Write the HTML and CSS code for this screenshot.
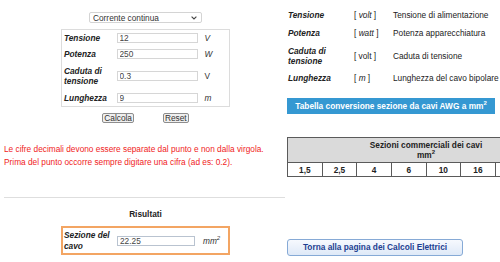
FILE: index.html
```html
<!DOCTYPE html>
<html lang="it">
<head>
  <meta charset="UTF-8">
  <title>Sezione cavi - corrente continua</title>
  <link rel="stylesheet" href="styles.css">
</head>
<body>

  <div class="page">

    <div class="calc">
      <div class="mode">
        <span class="scelta">
          <select>
            <option>Corrente continua</option>
            <option>Corrente alternata</option>
          </select>
          <svg class="freccia" width="6" height="4" viewBox="0 0 6 4"><path d="M0.6 0.6 L3 3 L5.4 0.6" fill="none" stroke="#444" stroke-width="1.1"/></svg>
        </span>
      </div>

      <table class="dati">
        <tr class="r1">
          <th>Tensione</th>
          <td class="campo"><input type="text" value="12"></td>
          <td class="unit"><i>V</i></td>
        </tr>
        <tr class="r1">
          <th>Potenza</th>
          <td class="campo"><input type="text" value="250"></td>
          <td class="unit"><i>W</i></td>
        </tr>
        <tr class="r2">
          <th>Caduta di<br>tensione</th>
          <td class="campo"><input type="text" value="0.3"></td>
          <td class="unit">V</td>
        </tr>
        <tr class="r3">
          <th>Lunghezza</th>
          <td class="campo"><input type="text" value="9"></td>
          <td class="unit"><i>m</i></td>
        </tr>
      </table>

      <div class="azioni">
        <button>Calcola</button>
        <button>Reset</button>
      </div>

      <p class="avviso">
        Le cifre decimali devono essere separate dal punto e non dalla virgola.<br>
        Prima del punto occorre sempre digitare una cifra (ad es: 0.2).
      </p>

      <hr>

      <h2>Risultati</h2>

      <table class="risultato">
        <tr>
          <th>Sezione del<br>cavo</th>
          <td class="campo"><input type="text" value="22.25"></td>
          <td class="unit"><i>mm<sup>2</sup></i></td>
        </tr>
      </table>
    </div>

    <div class="info">
      <table class="legenda">
        <tr class="r1">
          <th>Tensione</th>
          <td class="um">[ <i>volt</i> ]</td>
          <td>Tensione di alimentazione</td>
        </tr>
        <tr class="r1">
          <th>Potenza</th>
          <td class="um">[ <i>watt</i> ]</td>
          <td>Potenza apparecchiatura</td>
        </tr>
        <tr class="r2">
          <th>Caduta di<br>tensione</th>
          <td class="um">[ volt ]</td>
          <td>Caduta di tensione</td>
        </tr>
        <tr class="r1">
          <th>Lunghezza</th>
          <td class="um">[ <i>m</i> ]</td>
          <td>Lunghezza del cavo bipolare</td>
        </tr>
      </table>

      <div class="titolo">Tabella conversione sezione da cavi AWG a mm<sup>2</sup></div>

      <table class="sezioni">
        <tr>
          <th colspan="8">Sezioni commerciali dei cavi<br>mm<sup>2</sup></th>
        </tr>
        <tr>
          <td>1,5</td>
          <td>2,5</td>
          <td>4</td>
          <td>6</td>
          <td>10</td>
          <td>16</td>
          <td></td>
          <td></td>
        </tr>
      </table>

      <a class="torna" href="#">Torna alla pagina dei Calcoli Elettrici</a>
    </div>

  </div>

</body>
</html>
```

FILE: styles.css
```css
* {
  box-sizing: border-box;
}

body {
  margin: 0;
  font-family: "Liberation Sans", Arial, sans-serif;
  font-size: 8.3px;
  color: #222;
  background: #fff;
  overflow: hidden;
}

.page {
  display: flex;
  padding-left: 4px;
}

/* colonna calcolo */

.calc {
  width: 283px;
  flex-shrink: 0;
}

.mode {
  padding-top: 12px;
  text-align: center;
}

.scelta {
  position: relative;
  display: inline-block;
  vertical-align: top;
}

select {
  display: block;
  width: 113px;
  height: 11px;
  font-family: inherit;
  font-size: 8.3px;
  color: #333;
  border: 1px solid #d4d4d4;
  border-radius: 2px;
  padding: 0 3px;
  background: #fff;
  appearance: none;
  -webkit-appearance: none;
}

.freccia {
  position: absolute;
  right: 5px;
  top: 4px;
  pointer-events: none;
}

table {
  border-collapse: collapse;
}

th {
  text-align: left;
  font-weight: bold;
  font-style: italic;
  line-height: 10px;
  padding: 0;
}

td {
  padding: 0;
  line-height: 10px;
}

.dati {
  width: 169px;
  margin: 6px auto 0;
  border: 1px solid #dcdcdc;
}

.dati tr.r1 { height: 16px; }
.dati tr.r2 { height: 28px; }
.dati tr.r3 { height: 17px; }

.dati th {
  width: 55px;
  padding-left: 2px;
}

.campo {
  width: 85px;
  padding-right: 2px;
}

input {
  display: block;
  width: 81px;
  height: 10px;
  font-family: inherit;
  font-size: 8.3px;
  color: #444;
  border: 1px solid #d6d6d6;
  padding: 0 2px;
}

.unit {
  padding-left: 3px;
  color: #333;
}

.azioni {
  display: flex;
  justify-content: center;
  gap: 29px;
  margin-top: 6px;
}

button {
  height: 10px;
  padding: 0 1px;
  font-family: inherit;
  font-size: 8.3px;
  line-height: 8px;
  color: #333;
  background: #efefef;
  border: 1px solid #8d8d8d;
  border-radius: 2px;
}

.avviso {
  margin: 20px 0 0;
  line-height: 13px;
  color: #f01c1c;
}

hr {
  border: 0;
  border-top: 1px solid #dedede;
  margin: 28px 0 0;
  width: 281px;
}

h2 {
  margin: 10px 0 0;
  font-size: 8.3px;
  line-height: 13px;
  text-align: center;
}

.risultato {
  width: 169px;
  height: 29px;
  margin: 5px auto 0;
  border: 2px solid #f3a563;
}

.risultato th {
  width: 55px;
  padding-left: 1px;
  line-height: 11px;
}

.risultato .campo {
  width: 82px;
}

.risultato input {
  width: 78px;
  border-color: #b9c3d0;
}

.risultato .unit {
  padding-left: 4px;
}

sup {
  font-size: 6px;
  line-height: 0;
}

/* colonna informazioni */

.info {
  flex: 1;
  min-width: 0;
}

.legenda {
  margin-top: 6px;
}

.legenda tr.r1 { height: 18px; }
.legenda tr.r2 { height: 27px; }

.legenda th {
  width: 67px;
  padding-left: 1px;
}

.legenda .um {
  width: 39px;
}

.titolo {
  width: 208px;
  height: 16px;
  margin-top: 11px;
  line-height: 16px;
  background: #3598d2;
  color: #fff;
  font-weight: bold;
  text-align: center;
}

.sezioni {
  width: 278px;
  table-layout: fixed;
  margin-top: 23px;
  border: 1px solid #5a5a5a;
}

.sezioni th {
  height: 25px;
  background: #dadada;
  text-align: center;
  font-style: normal;
  border: 1px solid #5a5a5a;
}

.sezioni td {
  height: 14px;
  text-align: center;
  font-weight: bold;
  border: 1px solid #5a5a5a;
}

.torna {
  display: block;
  width: 176px;
  height: 17px;
  margin-top: 62px;
  line-height: 15px;
  border: 1px solid #86aad6;
  border-radius: 3px;
  background: linear-gradient(#f6f9fe, #dfe9f7);
  color: #1d3f91;
  font-weight: bold;
  text-align: center;
  text-decoration: none;
}
```
